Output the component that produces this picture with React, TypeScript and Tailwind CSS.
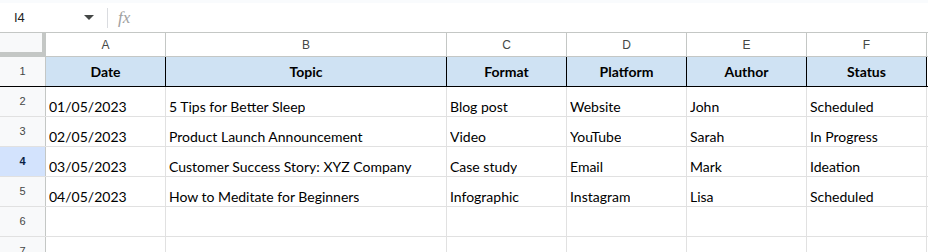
const columns = [
  { letter: "A", title: "Date", width: "w-[120px]" },
  { letter: "B", title: "Topic", width: "w-[281px]" },
  { letter: "C", title: "Format", width: "w-[120px]" },
  { letter: "D", title: "Platform", width: "w-[120px]" },
  { letter: "E", title: "Author", width: "w-[120px]" },
  { letter: "F", title: "Status", width: "w-[120px]" },
];

const rows = [
  ["01/05/2023", "5 Tips for Better Sleep", "Blog post", "Website", "John", "Scheduled"],
  ["02/05/2023", "Product Launch Announcement", "Video", "YouTube", "Sarah", "In Progress"],
  ["03/05/2023", "Customer Success Story: XYZ Company", "Case study", "Email", "Mark", "Ideation"],
  ["04/05/2023", "How to Meditate for Beginners", "Infographic", "Instagram", "Lisa", "Scheduled"],
  ["", "", "", "", "", ""],
  ["", "", "", "", "", ""],
];

const cellFont = "font-['Lato','Open_Sans',sans-serif]";
const uiFont = "font-['Liberation_Sans','Arial',sans-serif]";

function RowHeader({ n, active }: { n: number; active?: boolean }) {
  return (
    <div
      className={`flex h-full w-[46px] shrink-0 items-center justify-center border-r border-[#c4c7c5] text-[11px] ${uiFont} ${
        active ? "bg-[#d3e3fd] font-bold text-[#0b1f44]" : "bg-[#f8f9fa] text-[#444746]"
      }`}
    >
      {n}
    </div>
  );
}

export default function App() {
  return (
    <div className="h-[252px] w-[928px] overflow-hidden bg-white">
      {/* formula bar */}
      <div className="h-[3px] bg-[#f9fbfd]" />
      <div className={`flex h-[30px] items-center border-b border-[#c4c7c5] ${uiFont}`}>
        <span className="ml-[14px] w-[70px] text-[13px] text-[#1f1f1f]">I4</span>
        <svg width="10" height="5" viewBox="0 0 10 5">
          <path d="M0 0h10L5 5z" fill="#444746" />
        </svg>
        <div className="ml-[13px] h-[20px] w-px bg-[#dadce0]" />
        <span className="ml-[10px] font-['Liberation_Serif',serif] text-[17px] italic text-[#a0a0a0]">fx</span>
      </div>

      {/* column letters */}
      <div className={`flex h-[24px] border-b border-[#c4c7c5] ${uiFont}`}>
        <div className="h-full w-[46px] shrink-0 border-b-[4px] border-r-[4px] border-[#c4c7c5] bg-[#f8f9fa]" />
        {columns.map((c) => (
          <div
            key={c.letter}
            className={`${c.width} flex shrink-0 items-center justify-center border-r border-[#c4c7c5] text-[12px] text-[#444746]`}
          >
            {c.letter}
          </div>
        ))}
      </div>

      {/* header row */}
      <div className="flex h-[30px] border-b border-black">
        <RowHeader n={1} />
        {columns.map((c) => (
          <div
            key={c.title}
            className={`${c.width} flex shrink-0 items-center justify-center border-r border-black bg-[#cfe2f3] text-[14px] font-bold text-black ${cellFont}`}
          >
            {c.title}
          </div>
        ))}
      </div>

      {rows.map((row, i) => (
        <div key={i} className="flex h-[30px] border-b border-[#e1e1e1]">
          <RowHeader n={i + 2} active={i === 2} />
          {row.map((value, j) => (
            <div
              key={j}
              className={`${columns[j].width} flex shrink-0 items-end border-r border-[#e1e1e1] px-[3px] text-[14px] leading-[18px] text-black ${cellFont}`}
            >
              <span className="truncate">{value}</span>
            </div>
          ))}
        </div>
      ))}
    </div>
  );
}
